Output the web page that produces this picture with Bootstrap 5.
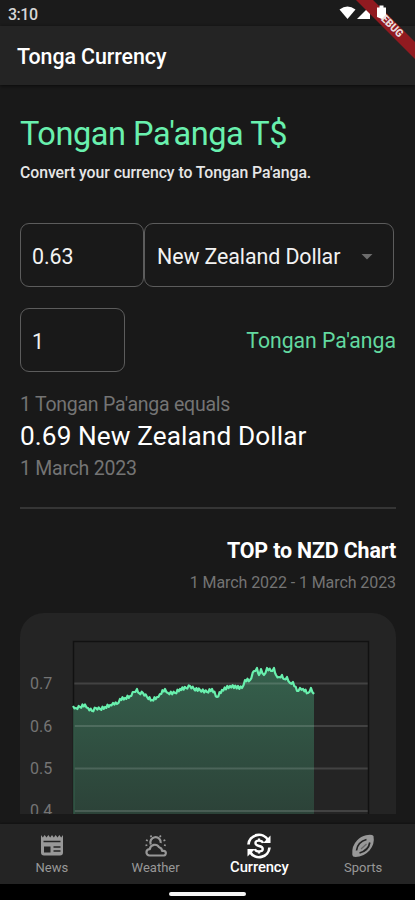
<!DOCTYPE html>
<html lang="en" data-bs-theme="dark">
<head>
<meta charset="utf-8">
<meta name="viewport" content="width=device-width, initial-scale=1">
<title>Tonga Currency</title>
<link href="https://cdn.jsdelivr.net/npm/bootstrap@5.3.0/dist/css/bootstrap.min.css" rel="stylesheet">
<style>
  body { font-family: Roboto, "Liberation Sans", sans-serif; background: #191919; color: #f2f2f2; }
  .screen { width: 415px; height: 900px; }
  .status-bar { height: 26px; background: #1b1b1b; font-size: 16px; line-height: 29px; padding: 0 8px; color: #d6d6d6; font-weight: 500; letter-spacing: -.5px; }
  .status-icons { width: 50px; height: 20px; margin: 3px 19px 0 0; }
  .ribbon { top: 0; right: 0; width: 70px; height: 70px; }
  .app-bar { height: 59px; background: #242424; padding: 2px 17px 0; box-shadow: 0 1px 3px #0b0b0b; z-index: 1; }
  .app-title { font-size: 21.4px; font-weight: 500; line-height: 30px; letter-spacing: -.08px; }
  .content { height: 729px; padding: 29px 19px 0 20px; }
  .mint { color: #69f0ae; }
  .page-title { font-size: 32.5px; line-height: 40px; font-weight: 400; letter-spacing: -.45px; }
  .subtitle { font-size: 15.8px; line-height: 20px; font-weight: 500; margin-top: 9px; color: #e6e6e6; letter-spacing: -.05px; }
  .box { height: 64px; border: 1.5px solid #5c5c5c; border-radius: 9px; background: transparent; font-size: 21.4px; padding: 4px 12px 0 11px; color: #f2f2f2; letter-spacing: -.1px; }
  .from-row { margin-top: 40px; }
  .to-row { margin-top: 21px; }
  .box-amount { width: 124px; }
  .box-currency { width: 249.5px; padding-left: 12px; }
  .box-base { width: 105px; }
  .target { font-size: 21.2px; color: #63d9a0; padding-top: 1px; }
  .muted { color: #747474; font-size: 19.5px; line-height: 26px; letter-spacing: -.24px; }
  .result { font-size: 26.2px; line-height: 32px; color: #fff; padding-top: 2px; letter-spacing: .1px; }
  .rule { height: 2px; background: #353535; margin-top: 25px; }
  .chart-title { font-size: 21.4px; line-height: 28px; font-weight: 700; margin-top: 28px; color: #fff; letter-spacing: -.15px; }
  .chart-range { font-size: 16px; line-height: 22px; color: #747474; margin-top: 7px; letter-spacing: -.08px; }
  .chart-card { height: 201px; margin-top: 19px; background: #242424; border-radius: 24px 24px 0 0; }
  .tabs { height: 60px; margin-top: 10px; background: #242424; box-shadow: 0 -1px 2px #111; }
  .tab { width: 103.75px; color: #989898; font-size: 13px; line-height: 16px; padding-top: 8px; }
  .tab svg { width: 28px; height: 28px; }
  .tab.current { color: #fff; font-size: 14.8px; font-weight: 500; letter-spacing: -.1px; }
  .tab.current span { margin-top: -1px; }
  .home-bar { height: 16px; background: #000; }
  .home-bar span { width: 77px; height: 4px; background: #f4f4f4; }
</style>
<script src="https://cdn.jsdelivr.net/npm/bootstrap@5.3.0/dist/js/bootstrap.bundle.min.js"></script>
</head>
<body>
<div class="screen position-relative overflow-hidden d-flex flex-column">
  <div class="status-bar d-flex justify-content-between flex-shrink-0">
    <span>3:10</span>
    <svg class="status-icons" viewBox="338 3 50 20" fill="#fff">
      <path d="M339.5 9.5Q347.5 3.5 355.500 9.5L347.500 19Z"/>
      <path d="M370 6V19H357Z"/>
    </svg>
  </div>
  <svg class="ribbon position-absolute z-3" viewBox="345 0 70 70" aria-label="Debug">
    <path d="M356 0H373L415 42V59Z" fill="#911a20"/>
    <path d="M377 7.500H379.500V5.500H383.500V7.500H386V18L383 19.500 377 17Z" fill="#fff"/>
    <text transform="translate(380.500 19.500) rotate(45)" font-family="Roboto, sans-serif" font-size="11" font-weight="900" fill="#eadcdc" textLength="26" lengthAdjust="spacingAndGlyphs">EBUG</text>
  </svg>

  <header class="app-bar d-flex align-items-center flex-shrink-0"><h1 class="app-title m-0">Tonga Currency</h1></header>

  <main class="content overflow-hidden flex-shrink-0">
    <h2 class="page-title mint mb-0">Tongan Pa'anga T$</h2>
    <p class="subtitle mb-0">Convert your currency to Tongan Pa'anga.</p>

    <div class="from-row d-flex">
      <div class="box box-amount d-flex align-items-center">0.63</div>
      <div class="box box-currency d-flex align-items-center justify-content-between text-nowrap">
        <span>New Zealand Dollar</span>
        <svg width="12" height="6" class="me-2" viewBox="0 0 12 6"><path d="M.5 0H11.500L6 5.500Z" fill="#6c6c6c"/></svg>
      </div>
    </div>
    <div class="to-row d-flex align-items-center justify-content-between">
      <div class="box box-base d-flex align-items-center">1</div>
      <span class="target">Tongan Pa'anga</span>
    </div>

    <div class="muted mt-3 pt-1">1 Tongan Pa'anga equals</div>
    <div class="result">0.69 New Zealand Dollar</div>
    <div class="muted mt-1">1 March 2023</div>
    <div class="rule"></div>

    <h3 class="chart-title text-end mb-0">TOP to NZD Chart</h3>
    <div class="chart-range text-end">1 March 2022 - 1 March 2023</div>
    <div class="chart-card overflow-hidden">
      <svg class="d-block" width="377" height="201" viewBox="20 613 377 201">
        <defs><linearGradient id="fade" gradientUnits="userSpaceOnUse" x1="0" y1="667" x2="0" y2="814">
          <stop offset="0" stop-color="#35604c"/><stop offset="1" stop-color="#2c4238"/>
        </linearGradient></defs>
        <path id="area" fill="url(#fade)"/>
        <path d="M73 683.500H368M73 726H368M73 768.500H368M73 811H368" stroke="#fff" stroke-opacity=".14" stroke-width="2"/>
        <path d="M73.500 814V641.500H368.500V814" fill="none" stroke="#111" stroke-width="1.500"/>
        <path d="M74 814V707" stroke="#355c4a" stroke-width="1.500"/>
        <path id="rate" fill="none" stroke="#69f0ae" stroke-width="2.200" stroke-linejoin="round"/>
        <g font-size="16" fill="#747474" font-family="Roboto, sans-serif">
          <text x="30" y="689">0.7</text><text x="30" y="731.500">0.6</text><text x="30" y="774">0.5</text><text x="30" y="816">0.4</text>
        </g>
      </svg>
    </div>
  </main>

  <nav class="tabs d-flex flex-shrink-0">
    <div class="tab d-flex flex-column align-items-center">
      <svg viewBox="0 0 28 28"><path d="M3 3l1.830 2.500L6.670 3 8.500 5.500 10.330 3l1.840 2.500L14 3l1.830 2.500L17.670 3l1.830 2.500L21.330 3l1.840 2.500L25 3V20.500q0 3-3 3H6q-3 0-3-3Z" fill="currentColor"/><path d="M5.500 9.500H22.500M15.500 15H22.500M15.500 19H22.500" stroke="#242424" stroke-width="1.700"/><path d="M6 14.500H12.500V20.500H6Z" fill="#242424"/></svg>
      <span>News</span>
    </div>
    <div class="tab d-flex flex-column align-items-center">
      <svg viewBox="0 0 28 28" fill="none" stroke="currentColor" stroke-width="2.200" stroke-linejoin="round"><path d="M8.800 12.500A5.200 5.200 0 1 1 18.700 11"/><path d="M7.500 23.500a3.200 3.200 0 0 1 .3-6.400 5 5 0 0 1 9.300-1.800 4 4 0 0 1 3 3.600h1a2.300 2.300 0 0 1 .8 4.600Z"/><path d="M8.500 3.500l1 1.500M18.800 3.500l-1 1.500M4 8l1.800.8M23.300 8l-1.800.8M3.500 13.500l1.800-.5M22 13l1.800.5" stroke-width="1.800"/></svg>
      <span>Weather</span>
    </div>
    <div class="tab current d-flex flex-column align-items-center">
      <svg viewBox="0 0 28 28" fill="none" stroke="currentColor" stroke-width="2.700"><path d="M3.500 12.500A10.500 10.500 0 0 1 23 8M24.500 15.500A10.500 10.500 0 0 1 5 20"/><path d="M25.500 3.500V11H18ZM2.500 24.500V17H10Z" fill="currentColor" stroke="none"/><path d="M18 11q-.8-2.400-4-2.400-3.600 0-3.600 2.500 0 2.200 3.600 2.900 3.800.7 3.800 3.100 0 2.400-3.800 2.400-3.400 0-4.100-2.500M14 6.500v2M14 19.500v2" stroke-width="2.300"/></svg>
      <span>Currency</span>
    </div>
    <div class="tab d-flex flex-column align-items-center">
      <svg viewBox="0 0 28 28"><path d="M17 3.200Q23 2 24.500 4 26 12 20.500 18.500 14.500 25 6.500 25 3.500 25 3.300 22.500 2.500 14 8 8.500 12 4 17 3.200Z" fill="currentColor"/><path d="M7.500 18.500Q8.500 10 17.500 7.500M10.500 21Q19.500 18.500 20.800 10.500" fill="none" stroke="#242424" stroke-width="1.700"/><path d="M12 17L17.500 12" stroke="#666" stroke-width="1.200"/></svg>
      <span>Sports</span>
    </div>
  </nav>
  <div class="home-bar d-flex justify-content-center flex-shrink-0 pt-1"><span class="rounded-pill mt-1"></span></div>
</div>
<script>
  // Exchange-rate samples in chart coordinates: [x, y].
  const keys = [[73,706],[76,708],[80,707],[85,704.5],[88,708],[92,711],[96,708],[100,709],[105,707],[110,705],[113,703],[117,704],[120,699],[125,698],[130,696],[134,692],[137,689],[139,693],[143,693],[147,697],[152,700],[157,697],[160,694],[165,689],[168,693],[175,693],[180,689],[186,688],[190,686],[194,689],[200,690],[207,692],[212,689],[217,697],[222,690],[230,686],[242,688],[245,680],[250,680],[254,671],[257,668],[259,675],[261,669],[264,675],[267,668],[271,671],[274,668],[276,675],[279,677],[282,675],[284,679],[287,677],[290,683],[293,682],[297,691],[300,688],[303,689],[308,693],[311,688],[314,694]];
  const pts = [];
  keys.forEach(([x, y], i) => {
    pts.push([x, y]);
    const n = keys[i + 1];
    if (!n) return;
    const steps = Math.round((n[0] - x) / 1.3);
    for (let s = 1; s < steps; s++) {
      const t = s / steps;
      pts.push([x + (n[0] - x) * t, y + (n[1] - y) * t + (s % 2 ? 1.3 : -1.3)]);
    }
  });
  const d = 'M' + pts.map(p => p[0].toFixed(1) + ' ' + p[1].toFixed(1)).join('L');
  document.getElementById('rate').setAttribute('d', d);
  document.getElementById('area').setAttribute('d', d + 'V814H73Z');
</script>
</body>
</html>
